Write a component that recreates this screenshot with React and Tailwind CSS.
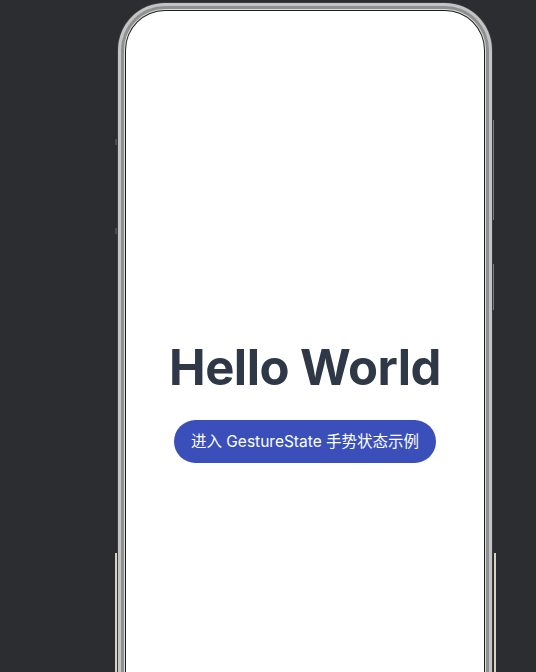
export default function App() {
  return (
    <div className="h-[672px] w-[536px] overflow-hidden bg-[#2b2d31] pl-[117px] pt-[2px]">
      <div className="relative w-[376px]">
        {/* side keys */}
        <div className="absolute left-[-2px] top-[137px] h-[6px] w-[2px] bg-[#4a4c50]" />
        <div className="absolute left-[-2px] top-[226px] h-[6px] w-[2px] bg-[#4a4c50]" />
        <div className="absolute left-[-2px] top-[551px] h-[200px] w-[2px] bg-[#d9d2c4]" />
        <div className="absolute right-[-1px] top-[118px] h-[100px] w-[1px] bg-[#77797d]" />
        <div className="absolute right-[-1px] top-[262px] h-[46px] w-[1px] bg-[#77797d]" />
        <div className="absolute right-[-3px] top-[551px] h-[200px] w-[2px] bg-[#d9d2c4]" />

        {/* frame */}
        <div className="h-[740px] rounded-[48px] bg-[#3a3b3e] p-[1px]">
          <div className="h-full rounded-[47px] bg-[#c4c4c4] p-[3px]">
            <div className="h-full rounded-[44px] bg-[#8f9092] p-[3px]">
              <div className="h-full rounded-[41px] bg-[#dadada] p-[1px]">
                <div className="h-full rounded-[40px] bg-[#1f1f21] p-[1px]">
                  <div className="flex h-full flex-col items-center rounded-[39px] bg-white pt-[327px] font-['Inter','Noto_Sans_CJK_SC',sans-serif]">
                    <h1 className="text-[49px] font-bold leading-[60px] tracking-[-0.5px] text-[#2e3846]">
                      Hello World
                    </h1>
                    <button className="mt-[22px] h-[43px] rounded-full bg-[#3a4fb9] px-[17px] text-[15.5px] text-white">
                      进入 GestureState 手势状态示例
                    </button>
                  </div>
                </div>
              </div>
            </div>
          </div>
        </div>
      </div>
    </div>
  );
}
